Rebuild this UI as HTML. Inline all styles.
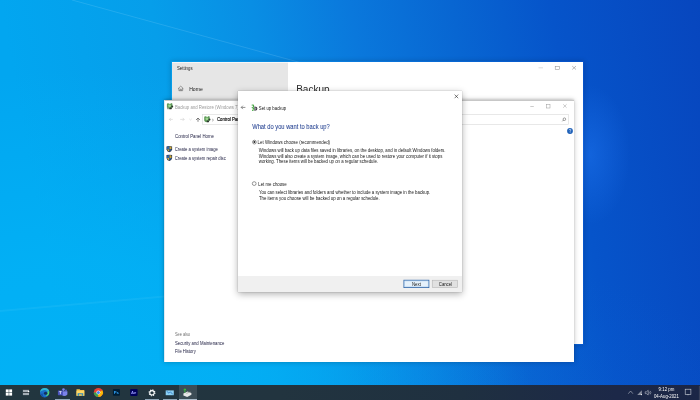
<!DOCTYPE html>
<html><head><meta charset="utf-8">
<style>
*{margin:0;padding:0;box-sizing:border-box}
html,body{width:700px;height:400px;overflow:hidden}
body{position:relative;font-family:"Liberation Sans",sans-serif;
background:
 radial-gradient(ellipse 40px 70px at 590px 155px, rgba(40,130,255,.35), rgba(40,130,255,0)),
 radial-gradient(ellipse 200px 130px at 540px 400px, rgba(16,110,226,.1), rgba(16,110,226,0)),
 radial-gradient(ellipse 450px 330px at 80px 400px, rgba(2,178,246,1) 0%, rgba(2,178,246,.8) 42%, rgba(2,178,246,0) 100%),
 linear-gradient(80deg, #02a6f0 69px, #069eea 217px, #098ee4 316px, #0a78dc 414px, #0866d2 513px, #0654ca 611px, #0746be 759px);
}
.a{position:absolute}
.t{position:absolute;white-space:nowrap;line-height:1;transform:scaleY(1.2) translateZ(0);transform-origin:0 84.65%;-webkit-text-stroke:0}
svg{position:absolute;overflow:visible}
</style></head><body>

<svg style="left:0;top:0" width="700" height="400">
  <path d="M72 0 L320 68" stroke="rgba(180,230,255,.16)" stroke-width="1"/>
  <path d="M0 311 L170 296" stroke="rgba(190,235,255,.07)" stroke-width="2"/>
</svg>
<!-- ============ SETTINGS WINDOW ============ -->
<div class="a" style="left:171px;top:61px;width:413px;height:284px;box-shadow:0 0 5px rgba(0,0,0,.18)"></div>
<div class="a" style="left:172px;top:62px;width:411px;height:282px;background:#fff"></div>
<div class="a" style="left:172px;top:62px;width:116px;height:282px;background:#e6e6e6;border-top:1px solid #f6f6f6"></div>
<div class="t" style="left:177px;top:66.90px;font-size:4.3px;color:#222">Settings</div>
<svg style="left:0;top:0" width="700" height="400">
  <!-- home icon -->
  <path d="M178.1 88.7 L180.75 86.1 L183.4 88.7 M178.9 88 V90.7 H182.6 V88 M180.1 90.7 V89.2 H181.4 V90.7" fill="none" stroke="#3a3a3a" stroke-width=".45"/>
  <!-- settings window controls -->
  <path d="M538.5 67.8 H543" stroke="#bbb" stroke-width=".5"/>
  <rect x="555.2" y="66.6" width="4.4" height="3" fill="none" stroke="#888" stroke-width=".5"/>
  <path d="M572.2 66.1 L576 69.5 M576 66.1 L572.2 69.5" stroke="#777" stroke-width=".5"/>
</svg>
<div class="t" style="left:189.2px;top:86.50px;font-size:5.1px;color:#161616">Home</div>
<div class="t" style="left:296.2px;top:84.5px;font-size:10px;color:#2a2a2a;-webkit-text-stroke:0;transform:none">Backup</div>

<!-- ============ CONTROL PANEL WINDOW ============ -->
<div class="a" style="left:164px;top:100px;width:409.5px;height:262px;box-shadow:0 0 5px rgba(0,0,0,.24), 0 -1px 2px rgba(0,0,0,.12)"></div>
<div class="a" style="left:164px;top:100px;width:409.5px;height:262px;background:#fff;border-top:1px solid rgba(0,0,0,.22);border-left:1px solid rgba(200,220,235,.6)"></div>
<svg style="left:0;top:0" width="700" height="400">
  <!-- title icon -->
  <g>
    <path d="M166.9 104.2 Q167 103 168.2 103.2 L170 104 L171.6 103.1 Q172.6 103.4 172.4 104.6 L172.4 107.6 Q171.8 109.3 169.6 109.3 Q167.2 109.2 166.9 107.6 Z" fill="#5f9a5a"/>
    <circle cx="169.6" cy="105.8" r="1.4" fill="#a0d890"/>
    <circle cx="172.2" cy="106.6" r="1" fill="#2e3a30"/>
    <ellipse cx="170.6" cy="108.4" rx="1.2" ry=".9" fill="#2e3430"/>
    <rect x="167" y="107.6" width="2" height="1.6" fill="#9aa89a"/>
  </g>
  <!-- CP controls -->
  <path d="M530.3 106.5 H533.8" stroke="#999" stroke-width=".5"/>
  <rect x="546.6" y="104.6" width="3.4" height="3.4" fill="none" stroke="#999" stroke-width=".5"/>
  <path d="M563.2 104.3 L566.6 107.7 M566.6 104.3 L563.2 107.7" stroke="#999" stroke-width=".5"/>
  <!-- nav arrows -->
  <path d="M169.4 119.4 H172.8 M169.4 119.4 L170.9 117.9 M169.4 119.4 L170.9 120.9" fill="none" stroke="#c4c4c4" stroke-width=".5"/>
  <path d="M180.2 119.4 H184.2 M184.2 119.4 L182.7 117.9 M184.2 119.4 L182.7 120.9" fill="none" stroke="#c4c4c4" stroke-width=".5"/>
  <path d="M189.3 118.9 L190.5 120 L191.7 118.9" fill="none" stroke="#c4c4c4" stroke-width=".5"/>
  <path d="M198 121.8 V118 M196 120 L198 118 L200 120" fill="none" stroke="#555" stroke-width=".7"/>
  <!-- address box -->
  <rect x="202.5" y="114.5" width="210" height="10" fill="#fff" stroke="#d9d9d9" stroke-width=".6"/>
  <g>
    <path d="M204.2 117.2 Q204.3 116 205.5 116.2 L207.3 117 L208.9 116.1 Q209.9 116.4 209.7 117.6 L209.7 120.6 Q209.1 122.3 206.9 122.3 Q204.5 122.2 204.2 120.6 Z" fill="#5f9a5a"/>
    <circle cx="206.9" cy="118.8" r="1.4" fill="#a0d890"/>
    <circle cx="209.5" cy="119.6" r="1" fill="#2e3a30"/>
    <ellipse cx="207.9" cy="121.4" rx="1.2" ry=".9" fill="#2e3430"/>
  </g>
  <path d="M212.3 119.1 L213.4 120.1 L212.3 121.1" fill="none" stroke="#444" stroke-width=".55"/>
  <!-- search box -->
  <rect x="416" y="114.5" width="152.4" height="10" fill="#fff" stroke="#d9d9d9" stroke-width=".6"/>
  <circle cx="564.4" cy="119.2" r="1.3" fill="none" stroke="#444" stroke-width=".5"/>
  <path d="M563.5 120.1 L562.3 121.3" stroke="#444" stroke-width=".6"/>
  <!-- help icon -->
  <circle cx="570" cy="131" r="2.9" fill="#1c5fb8"/>
  <path d="M569.1 130.2 Q569.2 129.2 570.1 129.2 Q571 129.3 570.9 130.1 Q570.8 130.7 570.1 131 V131.7" fill="none" stroke="#fff" stroke-width=".6"/>
  <circle cx="570.1" cy="132.7" r=".35" fill="#fff"/>
  <!-- shields -->
  <g id="sh1">
    <path d="M166.5 146.4 Q169.3 145.5 172.1 146.4 V149.2 Q171.7 151.5 169.3 152.3 Q166.9 151.5 166.5 149.2 Z" fill="#1c2c4c"/>
    <path d="M169.3 146.3 V149.2 H171.5 V146.8 Q170.4 146.3 169.3 146.3 Z" fill="#c9a63c"/>
    <path d="M167.1 149.2 H169.3 V151.6 Q167.6 150.9 167.1 149.2 Z" fill="#d8b440"/>
    <path d="M167.1 149.2 V146.8 Q168.2 146.3 169.3 146.3 V149.2 Z" fill="#3567a8"/>
    <path d="M169.3 149.2 H171.5 Q171 150.9 169.3 151.6 Z" fill="#2e5c98"/>
  </g>
  <use href="#sh1" y="8.7"/>
</svg>
<div class="t" style="left:174.9px;top:105.50px;font-size:4.3px;color:#9a9a9a">Backup and Restore (Windows 7)</div>
<div class="t" style="left:216.9px;top:118.00px;font-size:4.3px;color:#000;-webkit-text-stroke:.12px #000">Control Panel &nbsp;›&nbsp; All Control Panel Items</div>
<div class="t" style="left:175px;top:135.40px;font-size:4.34px;color:#222244">Control Panel Home</div>
<div class="t" style="left:174.8px;top:148.40px;font-size:4.2px;color:#222244">Create a system image</div>
<div class="t" style="left:174.8px;top:157.00px;font-size:4.2px;color:#222244">Create a system repair disc</div>
<div class="t" style="left:175px;top:333.40px;font-size:3.9px;color:#707070">See also</div>
<div class="t" style="left:175px;top:341.90px;font-size:4.27px;color:#222244">Security and Maintenance</div>
<div class="t" style="left:175px;top:350.00px;font-size:4.18px;color:#222244">File History</div>

<!-- ============ DIALOG ============ -->
<div class="a" style="left:238px;top:90.7px;width:223.5px;height:201.3px;background:#fff;box-shadow:0 2px 7px rgba(0,0,0,.32), 0 0 1px rgba(0,0,0,.35)"></div>
<div class="a" style="left:238px;top:276px;width:223.5px;height:16px;background:#f0f0f0"></div>
<svg style="left:0;top:0" width="700" height="400">
  <path d="M454.6 94.6 L458.2 98.2 M458.2 94.6 L454.6 98.2" stroke="#111" stroke-width=".55"/>
  <path d="M241.2 107.4 H245.4 M241.2 107.4 L242.9 105.7 M241.2 107.4 L242.9 109.1" fill="none" stroke="#555" stroke-width=".65"/>
  <!-- dialog title icon -->
  <path d="M254.4 106.4 Q257.3 106.5 257.3 108.5 Q257.3 110.7 254.4 110.8 Z" fill="#3a3640"/>
  <path d="M254.8 107.3 Q256.3 107.5 256.3 108.5 Q256.3 109.7 254.8 109.9 Z" fill="#9a94a2"/>
  <path d="M251.7 105.2 Q253.6 104.6 253.6 106 Q253.6 107.2 252.6 107.7 Q253.8 108.2 253.8 109.2 Q253.6 110.4 252 110.3" fill="none" stroke="#4aa848" stroke-width="1.2"/>
  <circle cx="253" cy="109.6" r=".6" fill="#c8f4b0"/>
  <!-- radios -->
  <circle cx="254.4" cy="142.1" r="1.9" fill="#fff" stroke="#333" stroke-width=".5"/>
  <circle cx="254.4" cy="142.1" r="1" fill="#222"/>
  <circle cx="254.2" cy="183.6" r="1.9" fill="#fff" stroke="#333" stroke-width=".5"/>
  <!-- buttons -->
  <rect x="403.9" y="280.2" width="25" height="7.4" fill="#e5f1fb" stroke="#2d64a8" stroke-width=".8"/>
  <rect x="404.7" y="281" width="23.4" height="5.8" fill="none" stroke="#9cc3ea" stroke-width=".3"/>
  <rect x="432.2" y="280.2" width="25.5" height="7.4" fill="#e1e1e1" stroke="#adadad" stroke-width=".5"/>
</svg>
<div class="t" style="left:258.8px;top:107.10px;font-size:4.29px;color:#161616">Set up backup</div>
<div class="t" style="left:252.2px;top:124.95px;font-size:5.78px;color:#1e3c8e;-webkit-text-stroke:.04px currentColor">What do you want to back up?</div>
<div class="t" style="left:257.6px;top:140.90px;font-size:4.39px;color:#161616">Let Windows choose (recommended)</div>
<div class="t" style="left:258.8px;top:149.36px;font-size:4.34px;color:#161616">Windows will back up data files saved in libraries, on the desktop, and in default Windows folders.</div>
<div class="t" style="left:258.8px;top:154.76px;font-size:4.34px;color:#161616">Windows will also create a system image, which can be used to restore your computer if it stops</div>
<div class="t" style="left:258.8px;top:160.16px;font-size:4.34px;color:#161616">working. These items will be backed up on a regular schedule.</div>
<div class="t" style="left:258.3px;top:182.96px;font-size:4.34px;color:#161616">Let me choose</div>
<div class="t" style="left:258.9px;top:190.76px;font-size:4.34px;color:#161616">You can select libraries and folders and whether to include a system image in the backup.</div>
<div class="t" style="left:258.9px;top:197.40px;font-size:4.34px;color:#161616">The items you choose will be backed up on a regular schedule.</div>
<div class="t" style="left:411.9px;top:282.8px;font-size:4.4px;color:#161616">Next</div>
<div class="t" style="left:438.8px;top:282.9px;font-size:4.27px;color:#161616">Cancel</div>

<!-- ============ TASKBAR ============ -->
<div class="a" style="left:0;top:385px;width:700px;height:15px;background:linear-gradient(90deg,#22363f 0%,#22343f 40%,#1f3040 66%,#1c2848 88%,#1b2646 100%)"></div>
<div class="a" style="left:179px;top:385px;width:17.6px;height:15px;background:rgba(255,255,255,.12)"></div>
<div class="a" style="left:55px;top:398.8px;width:15px;height:1.2px;background:#8fa6b8"></div>
<div class="a" style="left:144.7px;top:398.8px;width:14.6px;height:1.2px;background:#8fa6b8"></div>
<div class="a" style="left:162.7px;top:398.8px;width:14.6px;height:1.2px;background:#8fa6b8"></div>
<div class="a" style="left:179px;top:398.8px;width:17.6px;height:1.2px;background:#a9bccb"></div>
<svg style="left:0;top:0" width="700" height="400">
  <!-- start -->
  <rect x="5.8" y="389.4" width="2.9" height="2.9" fill="#fff"/>
  <rect x="9.2" y="389.4" width="2.9" height="2.9" fill="#fff"/>
  <rect x="5.8" y="392.7" width="2.9" height="2.9" fill="#fff"/>
  <rect x="9.2" y="392.7" width="2.9" height="2.9" fill="#fff"/>
  <!-- task view -->
  <rect x="22.9" y="389.6" width="6.1" height="5.5" fill="#a3adb5"/>
  <rect x="22.9" y="388.9" width="6.1" height=".8" fill="#2a3a44"/>
  <rect x="22.9" y="392" width="6.1" height=".8" fill="#1e2a32"/>
  <circle cx="28.6" cy="391.5" r=".75" fill="#fff"/>
  <!-- edge -->
  <circle cx="44.7" cy="392.7" r="4.7" fill="#1a6fc8"/>
  <path d="M40 392.2 Q40.6 388 44.9 388 Q48.2 388.1 49.3 391.2 L47.4 391.4 Q45.6 389.6 43.2 390.3 Q41 391 40 392.2 Z" fill="#2fb8d0"/>
  <path d="M49.3 391.2 Q49.6 394.4 47.8 395.6 Q46.8 396.2 45.8 395.6 Q47.8 394.6 47.6 392.6 Q47.4 391.6 47.4 391.4 Z" fill="#58d86a"/>
  <ellipse cx="45.6" cy="393.3" rx="1.7" ry="1.5" fill="#13305e"/>
  <path d="M40.4 394 Q41.6 397.2 44.6 397.4 Q42.4 396 42.6 393.6 Z" fill="#1553a8"/>
  <!-- teams -->
  <circle cx="63.5" cy="389.6" r="1.3" fill="#7b83eb"/>
  <circle cx="66" cy="390.4" r="1" fill="#5059c9"/>
  <path d="M61.4 391.2 H67.4 V394.6 Q64.4 397.6 61.4 394.6 Z" fill="#7b83eb"/>
  <rect x="57.9" y="390.4" width="5" height="4.8" rx=".4" fill="#4b53bc"/>
  <path d="M59.2 391.6 H61.6 M60.4 391.6 V394.2" stroke="#fff" stroke-width=".7"/>
  <!-- explorer -->
  <path d="M76.5 389.2 H79.6 L80.4 390 H84.3 V395.8 H76.5 Z" fill="#f0c350"/>
  <rect x="76.5" y="390.8" width="7.8" height="5" fill="#ffd764"/>
  <rect x="77.6" y="393.2" width="5.6" height="2.6" fill="#3c8fb5"/>
  <rect x="79" y="394.2" width="2.8" height="1.6" fill="#f0c350"/>
  <!-- chrome -->
  <circle cx="98.4" cy="392.5" r="4.6" fill="#e94235"/>
  <path d="M98.4 392.5 L94.4 394.8 A4.6 4.6 0 0 0 98.4 397.1 Z" fill="#34a853"/>
  <path d="M98.4 392.5 L93.8 392.5 A4.6 4.6 0 0 0 94.4 394.8 Z" fill="#34a853"/>
  <path d="M98.4 392.5 L98.4 397.1 A4.6 4.6 0 0 0 102.4 394.8 Z" fill="#fbbc04"/>
  <path d="M98.4 392.5 L102.4 394.8 A4.6 4.6 0 0 0 102.4 390.2 Z" fill="#fbbc04"/>
  <circle cx="98.4" cy="392.5" r="2" fill="#fff"/>
  <circle cx="98.4" cy="392.5" r="1.5" fill="#4285f4"/>
  <!-- ps -->
  <rect x="112.9" y="388.9" width="7" height="6.8" rx=".8" fill="#001e36"/>
  <text x="113.8" y="394" font-family="Liberation Sans" font-size="4.2" font-weight="bold" fill="#31a8ff">Ps</text>
  <!-- ae -->
  <rect x="130.2" y="388.9" width="7.4" height="7" rx=".8" fill="#00005b"/>
  <text x="131" y="394.2" font-family="Liberation Sans" font-size="4.2" font-weight="bold" fill="#9999ff">Ae</text>
  <!-- settings gear -->
  <g transform="translate(152,392.8)">
    <circle r="2.9" fill="none" stroke="#fff" stroke-width="1.1" stroke-dasharray="1.1 1.18"/>
    <circle r="2.2" fill="none" stroke="#fff" stroke-width="1.1"/>
  </g>
  <!-- mail-ish -->
  <rect x="165.7" y="390.4" width="8.1" height="4.8" fill="#8cd0f4"/>
  <path d="M166.6 391.2 L169 393.2 L170.4 391.8 L172.8 394.4" fill="none" stroke="#2a72c0" stroke-width=".8"/>
  <!-- backup (active) -->
  <path d="M183.4 393.6 L187.6 391.4 L191.4 393 L191.4 394.8 L187.2 397 L183.4 395.4 Z" fill="#e8e8e8"/>
  <path d="M186.4 393.4 L190.6 391.6" stroke="#777" stroke-width=".5"/>
  <path d="M184.9 392.6 V388.8 M183.6 390.2 L184.9 388.8 L186.2 390.2" fill="none" stroke="#3cc03c" stroke-width="1"/>
  <!-- tray -->
  <path d="M628.3 393.7 L630.6 391 L632.9 393.7" fill="none" stroke="#c8ccd4" stroke-width=".55"/>
  <path d="M637.2 395 L641.8 390.3 V395 Z" fill="#8a90a0"/>
  <circle cx="641.4" cy="394.6" r=".6" fill="#fff"/>
  <path d="M645.2 391.8 H646.4 L648.2 390.3 V395 L646.4 393.6 H645.2 Z" fill="none" stroke="#c8ccd4" stroke-width=".55"/>
  <path d="M649 391.6 Q649.8 392.65 649 393.7 M650.2 390.9 Q651.6 392.65 650.2 394.4" fill="none" stroke="#c8ccd4" stroke-width=".5"/>
  <rect x="685.2" y="389.2" width="5.7" height="5.2" fill="none" stroke="#d0d4dc" stroke-width=".6"/>
  <path d="M687.6 394.4 L688 395.2 L688.4 394.4" fill="none" stroke="#d0d4dc" stroke-width=".5"/>
  <path d="M699.4 386 V400" stroke="#5a6070" stroke-width=".5"/>
</svg>
<div class="t" style="left:658.6px;top:387.7px;font-size:4.35px;color:#fff;-webkit-text-stroke:0">9:12 pm</div>
<div class="t" style="left:653.9px;top:394.8px;font-size:4.32px;color:#fff;-webkit-text-stroke:0">04-Aug-2021</div>
</body></html>
